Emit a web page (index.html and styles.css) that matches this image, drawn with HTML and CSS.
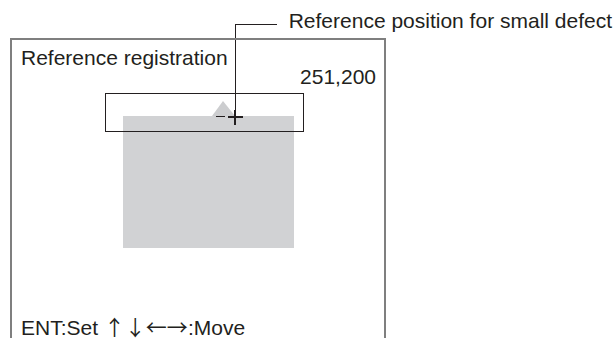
FILE: index.html
```html
<!DOCTYPE html>
<html lang="en">

<head>
    <meta charset="UTF-8" />
    <meta name="viewport" content="width=device-width, initial-scale=1.0" />
    <title>Reference registration</title>
    <link rel="stylesheet" href="styles.css">
</head>

<body>
    <div class="page">
        <div class="callout">
            <span class="callout_text">Reference position for small defect</span>
        </div>
        <div class="leader leader_h"></div>
        <div class="leader leader_v"></div>

        <div class="screen">
            <div class="screen_title">Reference registration</div>
            <div class="screen_coords">251,200</div>
            <div class="stage">
                <div class="model"></div>
                <div class="marker"></div>
                <div class="search_box"></div>
                <div class="tick"></div>
                <div class="cross"></div>
            </div>
            <div class="screen_help">ENT:Set <span class="arrows">&uarr;&darr;&larr;&rarr;</span>:Move</div>
        </div>
    </div>
</body>

</html>
```

FILE: styles.css
```css
body {
    margin: 0;
    background: #fff;
    color: #231f20;
    font-family: "Liberation Sans", Arial, sans-serif;
    font-size: 21px;
    line-height: 21px;
}

.page {
    position: relative;
    width: 616px;
    height: 338px;
}

.callout {
    height: 38px;
    box-sizing: border-box;
    padding-top: 10px;
    padding-right: 4px;
    text-align: right;
    white-space: nowrap;
}

/* leader line from the label down to the cross */
.leader {
    position: absolute;
    background: #231f20;
}

.leader_h {
    left: 235px;
    top: 24px;
    width: 42px;
    height: 1px;
}

.leader_v {
    left: 235px;
    top: 24px;
    width: 1px;
    height: 93px;
}

.screen {
    position: relative;
    margin-left: 10px;
    width: 376px;
    height: 300px;
    box-sizing: border-box;
    border: 2px solid #7f7f7f;
    border-bottom: none;
    padding: 7px 8px 0 9px;
    display: flex;
    flex-direction: column;
}

.screen_title {
    height: 21px;
}

.screen_coords {
    margin-top: -2px;
    text-align: right;
}

.stage {
    flex: 1;
}

.screen_help {
    height: 21px;
    white-space: nowrap;
}

.arrows {
    font-family: "Noto Sans CJK JP", sans-serif;
    line-height: 0;
}

/* canvas items, placed relative to the screen's inner edge (12,40) */
.model {
    position: absolute;
    left: 111px;
    top: 76px;
    width: 171px;
    height: 132px;
    background: #d1d2d4;
}

.marker {
    position: absolute;
    left: 200px;
    top: 61px;
    width: 0;
    height: 0;
    border-left: 11px solid transparent;
    border-right: 12px solid transparent;
    border-bottom: 15px solid #cccdcf;
}

.search_box {
    position: absolute;
    left: 93px;
    top: 53px;
    width: 199px;
    height: 39px;
    box-sizing: border-box;
    border: 1px solid #231f20;
}

.tick {
    position: absolute;
    left: 204px;
    top: 76px;
    width: 9px;
    height: 1px;
    background: #231f20;
}

.cross {
    position: absolute;
    left: 216px;
    top: 70px;
    width: 15px;
    height: 15px;
}

.cross::before,
.cross::after {
    content: "";
    position: absolute;
    background: #231f20;
}

.cross::before {
    left: 0;
    top: 6px;
    width: 15px;
    height: 2px;
}

.cross::after {
    left: 6px;
    top: 0;
    width: 2px;
    height: 15px;
}
```
